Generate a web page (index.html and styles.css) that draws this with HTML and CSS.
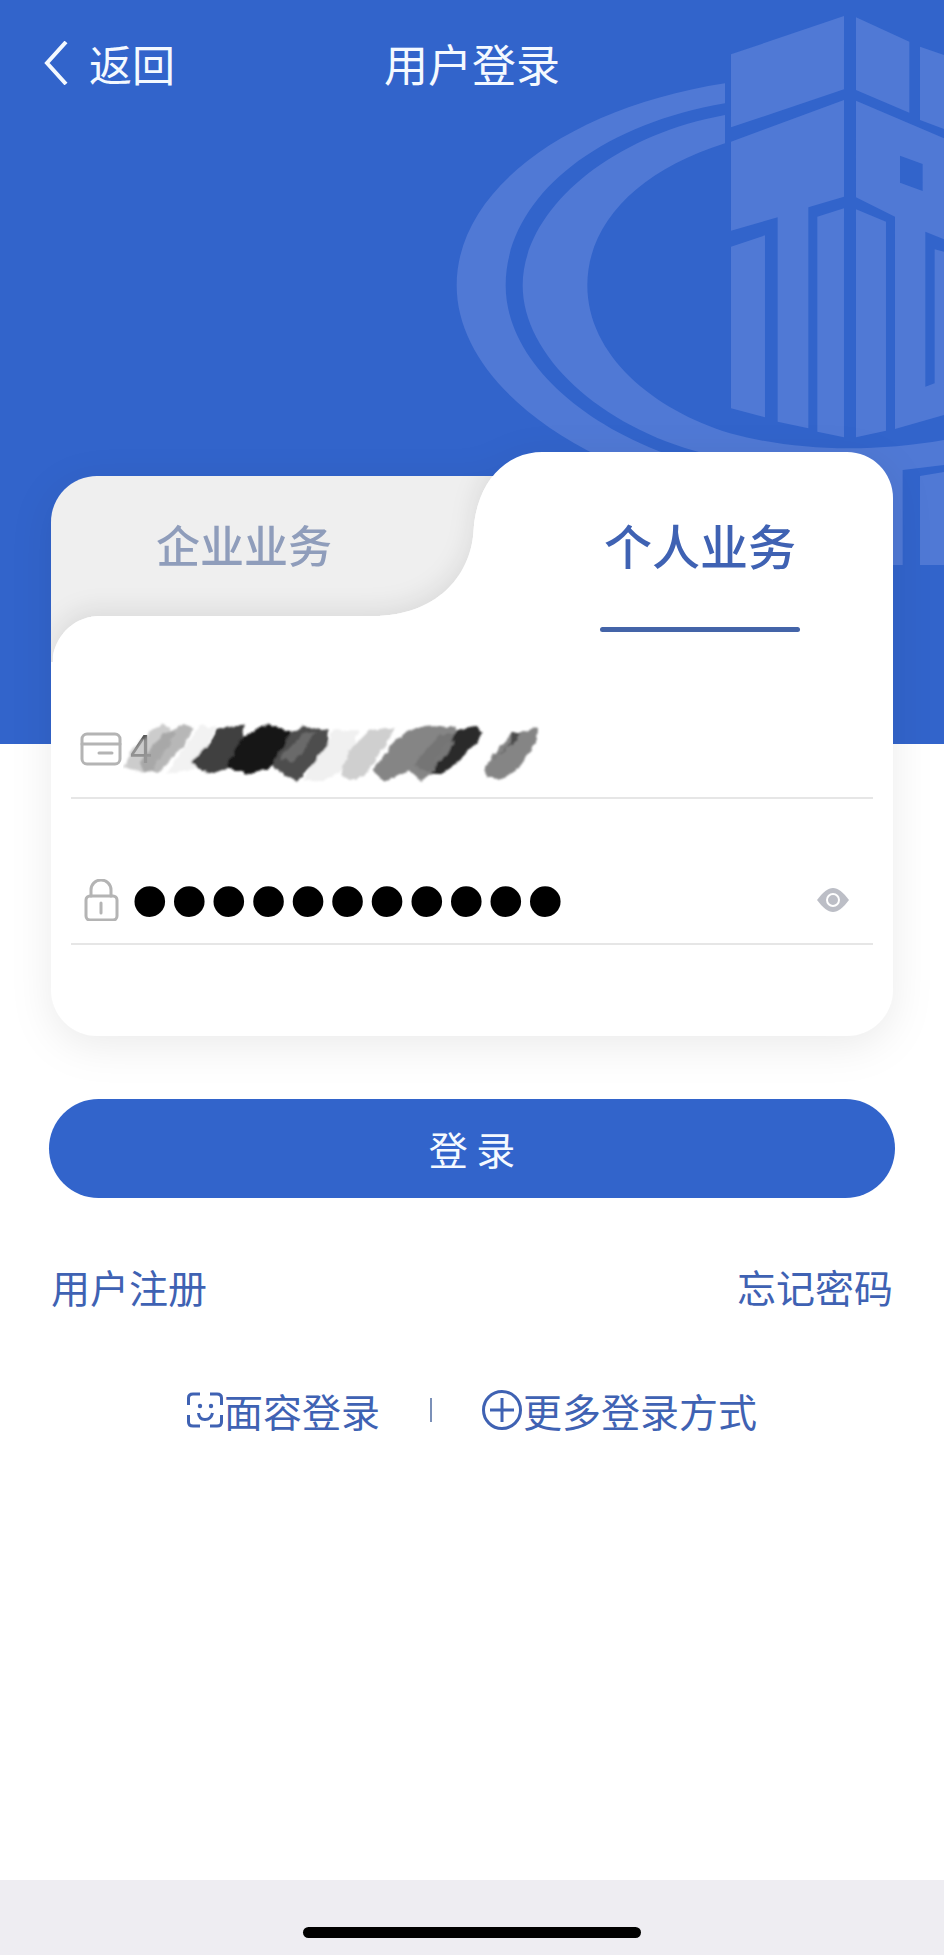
FILE: index.html
```html
<!DOCTYPE html>
<html lang="zh-CN">
<head>
<meta charset="utf-8">
<meta name="viewport" content="width=device-width, initial-scale=1">
<title>用户登录</title>
<link rel="stylesheet" href="styles.css">
</head>
<body>
<div class="hero">
  <svg class="hero-emblem" viewBox="0 0 1512 1700" aria-hidden="true">
    <path d="M855 250C400 320 50 560 50 856C50 1056 220 1244 480 1370L700 1370C400 1264 197 1066 197 856C197 606 450 380 855 310Z"/>
    <path d="M855 345C500 410 248 636 248 856C248 1066 480 1280 790 1360L1300 1500L1330 1695H1388V1410L1512 1395V1320C1300 1356 1080 1356 870 1300C640 1230 442 1066 442 856C442 666 600 510 855 430Z"/>
    <path d="M873 163L1212 48V268L873 382Z"/>
    <path d="M1248 52L1408 125V338L1248 270Z"/>
    <path d="M1440 140L1512 165V387L1440 360Z"/>
    <path d="M873 425L1212 300V590L1105 622V1285L1013 1265V652L873 692Z"/>
    <path d="M873 740L975 706V1252L873 1225Z"/>
    <path d="M1132 650L1212 625V1312L1132 1295Z"/>
    <path d="M1248 628L1338 665V1292L1248 1312Z"/>
    <path fill-rule="evenodd" d="M1248 302L1512 415V718L1456 695V1160L1484 1150V748L1512 755V1245L1365 1287V650L1248 592ZM1380 467V548L1448 573V492Z"/>
    <path d="M1440 1428L1512 1416V1695H1440Z"/>
  </svg>
  <header class="topbar">
    <button class="back" type="button">
      <svg class="back-icon" viewBox="0 0 24 44" aria-hidden="true"><path d="M22 1L3 22L22 43"/></svg>
      返回
    </button>
    <h1 class="title">用户登录</h1>
  </header>
</div>

<main class="main">
  <form class="card">
    <svg class="card-shape" viewBox="0 0 843 210" preserveAspectRatio="none" aria-hidden="true">
      <defs>
        <clipPath id="folder-clip"><path d="M0 211V70A46 46 0 0 1 46 24H470V211Z"/></clipPath>
        <filter id="fold-shadow" x="-10%" y="-20%" width="120%" height="140%">
          <feDropShadow dx="-2" dy="-8" stdDeviation="11" flood-color="#000" flood-opacity="0.08"/>
        </filter>
      </defs>
      <path class="folder-back" d="M0 211V70A46 46 0 0 1 46 24H470V211Z"/>
      <g clip-path="url(#folder-clip)">
        <path class="folder-front" filter="url(#fold-shadow)" d="M2 260V204C6 182 24 164 50 164H323C385 164 420 125 423 80C426 30 455 0 492 0H797V260Z"/>
      </g>
      <path class="folder-front" d="M2 211V204C6 182 24 164 50 164H323C385 164 420 125 423 80C426 30 455 0 492 0H797A46 46 0 0 1 843 46V211Z"/>
    </svg>
    <div class="tabs" role="tablist">
      <button class="tab" type="button" role="tab" aria-selected="false">企业业务</button>
      <button class="tab tab-active" type="button" role="tab" aria-selected="true">个人业务</button>
    </div>
    <div class="fields">
      <div class="field field-account">
        <svg class="field-icon" viewBox="0 0 42 42" aria-hidden="true">
          <rect x="2" y="6" width="38" height="30" rx="5"/><path d="M2 16H40M19 25H32"/>
        </svg>
        <input class="input" type="text" value="4" aria-label="证件号码">
        <svg class="scribble" viewBox="220 60 1260 190" aria-hidden="true">
          <defs>
            <filter id="rough" x="-5%" y="-10%" width="110%" height="120%">
              <feTurbulence type="fractalNoise" baseFrequency="0.04" numOctaves="2" seed="4" result="n"/>
              <feDisplacementMap in="SourceGraphic" in2="n" scale="18" xChannelSelector="R" yChannelSelector="G"/>
              <feGaussianBlur stdDeviation="3"/>
            </filter>
          </defs>
          <g filter="url(#rough)">
            <path fill="#f2f2f2" d="M350 220L450 75L500 80L440 205Z"/>
            <path fill="#b0b0b0" fill-opacity=".65" d="M222 200L250 140L310 85L345 75L380 100L300 218L240 205Z"/>
            <path fill="#989898" fill-opacity=".7" d="M285 215L270 190L340 100L395 72L432 85L400 140L330 215Z"/>
            <path fill="#404040" d="M425 185L490 120L500 88L585 72L580 110L550 200L490 222L440 205Z"/>
            <path fill="#f0f0f0" d="M760 240L850 90L930 90L890 200L820 245Z"/>
            <path fill="#4e4e4e" d="M665 195L690 110L760 80L835 90L830 140L770 215L740 242L690 215Z"/>
            <path fill="#6a6a6a" d="M690 175L760 100L800 95L730 185Z"/>
            <path fill="#151515" d="M535 190L580 110L655 72L725 90L705 130L655 205L600 222L540 205Z"/>
            <path fill="#cfcfcf" d="M880 200L900 150L960 90L1035 80L1010 130L950 220L905 242L875 225Z"/>
            <path fill="#858585" d="M972 205L1030 130L1080 85L1150 78L1215 80L1215 180L1150 220L1115 242L1080 210L1000 242Z"/>
            <path fill="#757575" d="M1090 195L1170 105L1225 95L1200 150L1140 215Z"/>
            <path fill="#2c2c2c" d="M1145 215L1200 130L1218 90L1270 78L1300 95L1270 140L1200 205L1175 222Z"/>
            <path fill="#777" d="M1140 195L1190 130L1215 120L1190 170Z"/>
            <path fill="#858585" d="M1303 215L1320 180L1385 100L1465 80L1462 125L1400 210L1345 243L1310 225Z"/>
            <path fill="#4c4c4c" d="M1325 180L1383 135L1385 98L1412 95L1395 130Z"/>
          </g>
        </svg>
      </div>
      <div class="field field-password">
        <svg class="field-icon" viewBox="0 0 42 42" aria-hidden="true">
          <rect x="6" y="17" width="31" height="24" rx="4"/><path d="M11 17V11A10 10 0 0 1 31 11V17M21 24V34"/>
        </svg>
        <input class="input input-password" type="password" value="00000000000" aria-label="密码">
        <button class="reveal" type="button" aria-label="显示密码">
          <svg class="eye" viewBox="0 0 32 24" aria-hidden="true"><path class="eye-body" d="M0 12C6 4 11 0 16 0S26 4 32 12C26 20 21 24 16 24S6 20 0 12Z"/><circle class="eye-ring" cx="16" cy="12" r="6"/></svg>
        </button>
      </div>
    </div>
  </form>

  <button class="submit" type="button">登 录</button>

  <nav class="links">
    <a class="link" href="#">用户注册</a>
    <a class="link" href="#">忘记密码</a>
  </nav>

  <div class="methods">
    <a class="link method" href="#">
      <svg class="face-icon" viewBox="0 0 36 36" aria-hidden="true"><path d="M1.500 13V6Q1.500 2 6 2H13M23 2H30Q34.500 2 34.500 6V13M34.500 23V30Q34.500 34 30 34H23M13 34H6Q1.500 34 1.500 30V23M11.500 21Q12 27.500 18 27.500T25.500 21"/><circle cx="13" cy="14" r="2.200"/><circle cx="24" cy="14" r="2.200"/></svg>面容登录</a>
    <span class="divider"></span>
    <a class="link method" href="#">
      <svg class="plus-icon" viewBox="0 0 40 40" aria-hidden="true"><circle cx="20" cy="20" r="18.500"/><path d="M8 20H32M20 8V32"/></svg>更多登录方式</a>
  </div>
</main>

<footer class="home-area"><span class="home-bar"></span></footer>
</body>
</html>
```
FILE: styles.css
```css
* {
  box-sizing: border-box;
}

body {
  margin: 0;
  min-height: 100vh;
  display: flex;
  flex-direction: column;
  background: #fff;
  color: #3f62b3;
  font-family: "Noto Sans CJK SC", sans-serif;
  font-size: 39px;
}

button,
input {
  margin: 0;
  padding: 0;
  border: 0;
  background: none;
  font-family: inherit;
  color: inherit;
}

.hero {
  position: relative;
  height: 744px;
  background: #3264cb;
  color: #f4f9ff;
}

.hero-emblem {
  position: absolute;
  top: 0;
  right: 0;
  width: 504px;
  fill: #5079d5;
}

.topbar {
  position: relative;
  display: grid;
  grid-template-columns: 1fr auto 1fr;
  align-items: center;
  padding: 31px 44px;
}

.back {
  display: flex;
  align-items: center;
  gap: 21px;
  font-size: 43px;
  line-height: 64px;
}

.back-icon {
  width: 24px;
  height: 44px;
  fill: none;
  stroke: currentColor;
  stroke-width: 4;
}

.title {
  margin: 0;
  font-size: 44px;
  font-weight: 400;
  line-height: 64px;
}

.main {
  position: relative;
  flex: 1;
  margin-top: -292px;
  padding: 0 49px;
}

.card {
  position: relative;
  margin: 0 2px;
  height: 584px;
  filter: drop-shadow(0 10px 20px rgba(0, 0, 0, 0.08));
}

.card-shape {
  position: absolute;
  top: 0;
  left: 0;
  width: 100%;
  height: 210px;
}

.folder-back {
  fill: #efefef;
}

.folder-front {
  fill: #fff;
}

.tabs {
  position: relative;
  display: grid;
  grid-template-columns: 1fr 1fr;
  column-gap: 70px;
  height: 210px;
}

.tab {
  display: flex;
  flex-direction: column;
  align-items: center;
  padding-top: 62px;
  font-size: 44px;
  font-weight: 500;
  line-height: 60px;
  color: #8f9dbb;
}

.tab-active {
  font-size: 48px;
  color: #3f62b3;
}

.tab-active::after {
  content: "";
  width: 200px;
  height: 5px;
  margin-top: 53px;
  border-radius: 3px;
  background: #4464a8;
}

.fields {
  height: 374px;
  padding: 39px 20px 0;
  border-radius: 0 0 46px 46px;
  background: #fff;
}

.field {
  position: relative;
  display: flex;
  align-items: center;
  gap: 8px;
  padding: 0 24px 0 9px;
  border-bottom: 2px solid #e6e6e6;
}

.field-account {
  height: 98px;
}

.field-password {
  height: 88px;
  margin-top: 58px;
}

.field-icon {
  flex: none;
  width: 42px;
  height: 42px;
  fill: none;
  stroke: #b4b4b4;
  stroke-width: 3;
  stroke-linecap: round;
}

.input {
  flex: 1;
  min-width: 0;
  height: 60px;
  font-family: "Liberation Sans", sans-serif;
  font-size: 40px;
  color: #555;
  outline: 0;
}

.input-password {
  font-size: 113px;
  color: #000;
}

.scribble {
  position: absolute;
  top: 19px;
  left: 52px;
  width: 420px;
  height: 64px;
}

.reveal {
  display: flex;
}

.eye {
  width: 32px;
  height: 24px;
}

.eye-body {
  fill: #bcbec6;
}

.eye-ring {
  fill: none;
  stroke: #fff;
  stroke-width: 2;
}

.submit {
  display: block;
  width: 100%;
  height: 99px;
  margin-top: 63px;
  padding-bottom: 2px;
  border-radius: 50px;
  background: #3264cb;
  color: #f4f9ff;
  font-size: 39px;
}

.links {
  display: flex;
  justify-content: space-between;
  margin-top: 58px;
  padding: 0 2px;
}

.link {
  color: #3f62b3;
  line-height: 60px;
  text-decoration: none;
}

.methods {
  display: flex;
  justify-content: center;
  align-items: center;
  gap: 50px;
  margin-top: 64px;
}

.method {
  display: flex;
  align-items: center;
  gap: 1px;
}

.face-icon {
  width: 36px;
  height: 36px;
  fill: none;
  stroke: currentColor;
  stroke-width: 3;
}

.face-icon circle {
  fill: currentColor;
  stroke: none;
}

.plus-icon {
  width: 40px;
  height: 40px;
  fill: none;
  stroke: currentColor;
  stroke-width: 3;
}

.divider {
  width: 2px;
  height: 24px;
  background: #7b90b8;
}

.home-area {
  display: flex;
  justify-content: center;
  align-items: flex-end;
  height: 75px;
  padding-bottom: 17px;
  background: #eeedf2;
}

.home-bar {
  width: 338px;
  height: 11px;
  border-radius: 6px;
  background: #000;
}
```
